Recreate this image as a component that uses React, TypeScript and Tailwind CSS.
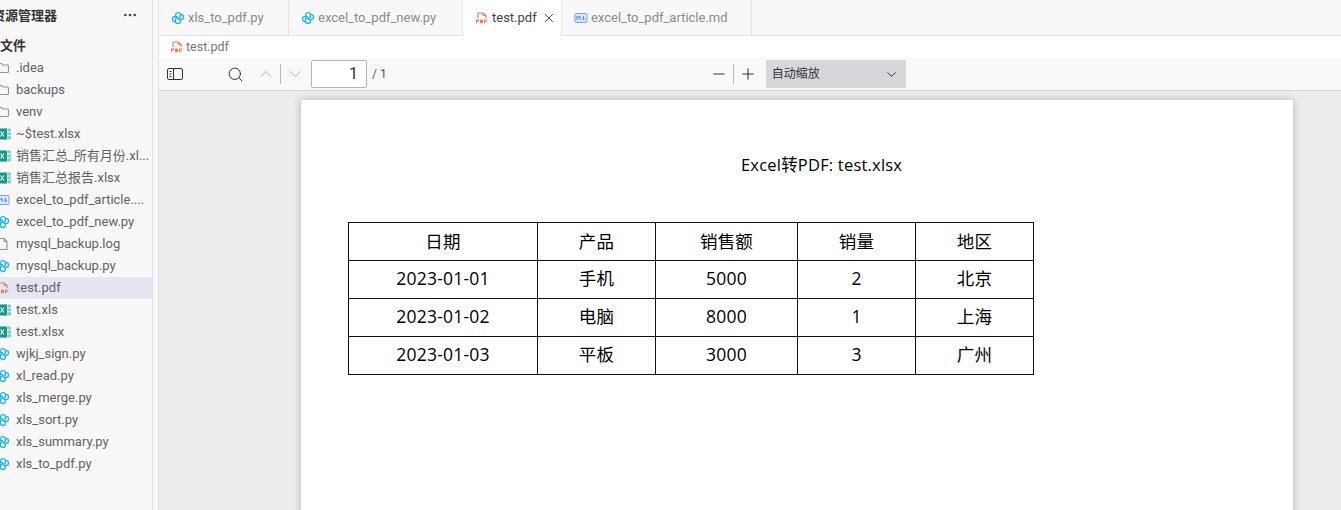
import { ChevronDown, ChevronUp, Minus, Plus, Search, X, MoreHorizontal } from "lucide-react";

type Kind = "folder" | "excel" | "md" | "py" | "log" | "pdf";

const files: { name: string; kind: Kind; active?: boolean }[] = [
    { name: ".idea", kind: "folder" },
    { name: "backups", kind: "folder" },
    { name: "venv", kind: "folder" },
    { name: "~$test.xlsx", kind: "excel" },
    { name: "销售汇总_所有月份.xl...", kind: "excel" },
    { name: "销售汇总报告.xlsx", kind: "excel" },
    { name: "excel_to_pdf_article....", kind: "md" },
    { name: "excel_to_pdf_new.py", kind: "py" },
    { name: "mysql_backup.log", kind: "log" },
    { name: "mysql_backup.py", kind: "py" },
    { name: "test.pdf", kind: "pdf", active: true },
    { name: "test.xls", kind: "excel" },
    { name: "test.xlsx", kind: "excel" },
    { name: "wjkj_sign.py", kind: "py" },
    { name: "xl_read.py", kind: "py" },
    { name: "xls_merge.py", kind: "py" },
    { name: "xls_sort.py", kind: "py" },
    { name: "xls_summary.py", kind: "py" },
    { name: "xls_to_pdf.py", kind: "py" },
];

const rows = [
    ["日期", "产品", "销售额", "销量", "地区"],
    ["2023-01-01", "手机", "5000", "2", "北京"],
    ["2023-01-02", "电脑", "8000", "1", "上海"],
    ["2023-01-03", "平板", "3000", "3", "广州"],
];

const colWidths = ["w-[189px]", "w-[118px]", "w-[142px]", "w-[118px]", "w-[118px]"];

function FileIcon({ kind }: { kind: Kind }) {
    if (kind === "folder") {
        return (
            <svg width="14" height="14" viewBox="0 0 14 14" fill="none" stroke="#8f93a8" strokeWidth="1.1">
                <path d="M1.5 3.5a1 1 0 0 1 1-1h3l1.3 1.5h4.7a1 1 0 0 1 1 1v5.5a1 1 0 0 1-1 1h-9a1 1 0 0 1-1-1z" />
            </svg>
        );
    }
    if (kind === "excel") {
        return (
            <svg width="15" height="14" viewBox="0 0 15 14">
                <rect x="7" y="1.5" width="8" height="11" rx="1" fill="#7fcfc4" />
                <path d="M11 1.5v11M7 5h8M7 8.7h8" stroke="#fff" strokeWidth="0.8" />
                <rect x="2" y="1.5" width="9" height="11" rx="1" fill="#109a8c" />
                <path d="M4.6 4.5l3.4 5M8 4.5l-3.4 5" stroke="#fff" strokeWidth="1.1" />
            </svg>
        );
    }
    if (kind === "md") {
        return (
            <svg width="14" height="14" viewBox="0 0 14 14">
                <rect x="1" y="2.5" width="12" height="9" rx="1" fill="#dbe7fd" stroke="#7aa5f5" />
                <path d="M3 9V5l1.5 2L6 5v4M9.5 5v3.5M8 7.5l1.5 1.5L11 7.5" fill="none" stroke="#3f7ff0" strokeWidth="0.9" />
            </svg>
        );
    }
    if (kind === "py") {
        return (
            <svg width="14" height="14" viewBox="0 0 14 14" fill="none" stroke="#14b4ee" strokeWidth="1.3">
                <path d="M4.7 4.9V3.6c0-1.2 1-1.9 2.3-1.9s2.4.7 2.4 1.9v2.2c0 .8-.6 1.2-1.3 1.2H5.9c-.8 0-1.4.5-1.4 1.2v2.2c0 1.2 1 1.9 2.4 1.9s2.4-.7 2.4-1.9V9.1" />
                <path d="M9.4 3.7h1.2c1.2 0 1.9 1 1.9 2.3s-.7 2.4-1.9 2.4H7.2" />
                <path d="M4.6 10.3H3.4c-1.2 0-1.9-1-1.9-2.3s.7-2.4 1.9-2.4h3.4" />
            </svg>
        );
    }
    if (kind === "log") {
        return (
            <svg width="14" height="14" viewBox="0 0 14 14" fill="none" stroke="#8f93a8" strokeWidth="1.1">
                <path d="M3 1.5h5l3 3v8H3zM8 1.5v3h3" />
            </svg>
        );
    }
    return (
        <svg width="14" height="14" viewBox="0 0 14 14">
            <path d="M3 7V2h5l3 2.5V7" fill="none" stroke="#f2795c" strokeWidth="1.2" />
            <path d="M8 2v2.5h3" fill="none" stroke="#f2795c" strokeWidth="1" />
            <path d="M1 8.6h3v1.8H2v1.8H1zM5 8.6h2.2l.8.9v1.8l-.8.9H5zM9 8.6h3.5v1H10v.6h2v1h-2v1H9z" fill="#f2795c" />
        </svg>
    );
}

function Tab({ name, kind, active, width }: { name: string; kind: Kind; active?: boolean; width: string }) {
    return (
        <div
            className={`flex h-[36px] items-center border-r border-[#e5e5e5] pl-[12px] ${width} ${
                active ? "bg-white text-[#444444]" : "border-b bg-[#f8f8f8] text-[#8a8a8a]"
            }`}
        >
            <FileIcon kind={kind} />
            <span className="ml-[3px] text-[13px] whitespace-nowrap">{name}</span>
            {active && <X size={14} strokeWidth={1.5} className="ml-[5px] text-[#333333]" />}
        </div>
    );
}

function Sidebar() {
    return (
        <aside className="flex h-full w-[153px] shrink-0 flex-col overflow-hidden border-r border-[#e3e3e3] bg-[#f8f8f8]">
            <div className="flex h-[35px] items-center justify-between pr-[14px] pb-[6px]">
                <span className="-ml-[8px] text-[13px] font-semibold text-[#333333] [font-family:'Noto_Sans_CJK_SC',sans-serif]">
                    资源管理器
                </span>
                <MoreHorizontal size={16} className="text-[#444444]" />
            </div>
            <div className="flex h-[22px] items-center text-[13px] font-semibold text-[#333333]">文件</div>
            <ul>
                {files.map((file) => (
                    <li
                        key={file.name}
                        className={`flex h-[22px] items-center text-[13px] whitespace-nowrap text-[#616161] ${
                            file.active ? "bg-[#e4e6f1]" : ""
                        }`}
                    >
                        <span className="-ml-[4px] flex w-[20px] shrink-0">
                            <FileIcon kind={file.kind} />
                        </span>
                        {file.name}
                    </li>
                ))}
            </ul>
        </aside>
    );
}

function Toolbar() {
    return (
        <div className="flex h-[33px] shrink-0 items-center border-b border-[#d4d4d7] bg-[#f9f9fa] text-[#333333]">
            <svg width="18" height="14" viewBox="0 0 18 14" fill="none" stroke="#333333" className="ml-[7px]">
                <rect x="1.5" y="1.5" width="15" height="11" rx="1.5" />
                <path d="M7.5 1.5v11M3.5 4.5h2M3.5 7h2M3.5 9.5h2" />
            </svg>
            <Search size={17} strokeWidth={1.4} className="ml-[43px]" />
            <ChevronUp size={20} strokeWidth={1.1} className="ml-[12px] text-[#a8a8ad]" />
            <span className="ml-[4px] h-[20px] w-px bg-[#b8b8bb]" />
            <ChevronDown size={20} strokeWidth={1.1} className="ml-[4px] text-[#a8a8ad]" />
            <div className="ml-[6px] flex h-[28px] w-[56px] items-center justify-end rounded-[2px] border border-[#b4b4b8] bg-white pr-[8px] text-[16px]">
                1
            </div>
            <span className="ml-[5px] text-[12px] text-[#555555]">/ 1</span>
            <Minus size={18} strokeWidth={1.4} className="ml-[323px]" />
            <span className="ml-[5px] h-[20px] w-px bg-[#b8b8bb]" />
            <Plus size={18} strokeWidth={1.4} className="ml-[5px]" />
            <div className="ml-[9px] flex h-[28px] w-[140px] items-center justify-between bg-[#d7d7db] pr-[7px] pl-[6px] text-[12px]">
                <span>自动缩放</span>
                <ChevronDown size={15} strokeWidth={1.6} />
            </div>
        </div>
    );
}

function PdfPage() {
    return (
        <div className="h-[420px] w-[992px] overflow-hidden bg-white pt-[52px] pl-[47px] tracking-[0.2px] text-black shadow-[0_0_8px_rgba(0,0,0,0.25)] [font-family:'Open_Sans','Noto_Sans_CJK_SC',sans-serif]">
            <div className="h-[70px] pl-[393px] text-[16.5px] leading-[25px] whitespace-nowrap">Excel转PDF: test.xlsx</div>
            <table className="table-fixed border-collapse text-[17.5px]">
                <tbody>
                    {rows.map((row, r) => (
                        <tr key={row[0]} className="h-[38px]">
                            {row.map((cell, i) => (
                                <td
                                    key={i}
                                    className={`border border-[#111111] p-0 text-center ${colWidths[i]} ${
                                        r > 0 ? "pb-[2px]" : ""
                                    }`}
                                >
                                    {cell}
                                </td>
                            ))}
                        </tr>
                    ))}
                </tbody>
            </table>
        </div>
    );
}

export default function App() {
    return (
        <div className="flex h-[510px] w-[1341px] overflow-hidden bg-[#f8f8f8] [font-family:'Roboto','Noto_Sans_CJK_SC',sans-serif]">
            <Sidebar />
            <div className="ml-[5px] flex min-w-0 flex-1 flex-col border-l border-[#e3e3e3]">
                <div className="flex shrink-0 bg-[#f8f8f8]">
                    <Tab name="xls_to_pdf.py" kind="py" width="w-[130px]" />
                    <Tab name="excel_to_pdf_new.py" kind="py" width="w-[174px]" />
                    <Tab name="test.pdf" kind="pdf" active width="w-[99px]" />
                    <Tab name="excel_to_pdf_article.md" kind="md" width="w-[190px]" />
                    <div className="h-[36px] flex-1 border-b border-[#e5e5e5]" />
                </div>
                <div className="flex h-[22px] shrink-0 items-center bg-white pl-[11px] text-[12.5px] text-[#777777]">
                    <FileIcon kind="pdf" />
                    <span className="ml-[2px]">test.pdf</span>
                </div>
                <Toolbar />
                <div className="flex flex-1 overflow-hidden bg-[#ededf0] pt-[9px] pl-[142px]">
                    <PdfPage />
                </div>
            </div>
        </div>
    );
}
